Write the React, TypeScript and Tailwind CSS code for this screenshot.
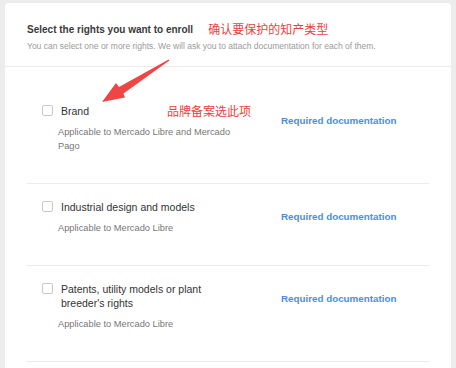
import React from "react";

const items = [
  {
    title: "Brand",
    sub: "Applicable to Mercado Libre and Mercado Pago",
  },
  { title: "Industrial design and models", sub: "Applicable to Mercado Libre" },
  {
    title: "Patents, utility models or plant breeder's rights",
    sub: "Applicable to Mercado Libre",
  },
];

const sans = "font-['Liberation_Sans','Noto_Sans_CJK_SC',sans-serif]";
const cjk = "font-['Noto_Sans_CJK_SC',sans-serif]";

function Checkbox() {
  return (
    <span className="mt-[1px] block h-[11px] w-[11px] shrink-0 rounded-[2px] border border-[#c8c8c8] bg-white" />
  );
}

export default function App() {
  return (
    <div className={`h-[368px] w-[456px] overflow-hidden bg-[#ececec] pl-[5px] pr-[5px] pt-[3px] ${sans}`}>
      <div className="relative h-[400px] rounded-[4px] bg-white">
        {/* Header */}
        <div className="border-b border-[#ececec] px-[22px] pb-[13px] pt-[18px]">
          <div className="flex items-center">
            <h2 className="text-[10px] font-bold leading-[15px] text-[#3a3a3a]">
              Select the rights you want to enroll
            </h2>
            <span className={`ml-[15px] text-[12px] leading-[16px] text-[#e8423d] ${cjk}`}>
              确认要保护的知产类型
            </span>
          </div>
          <p className="mt-[3px] text-[8.5px] leading-[13px] text-[#9a9a9a]">
            You can select one or more rights. We will ask you to attach documentation for each of them.
          </p>
        </div>

        {/* Rights list */}
        <div className="px-[22px] pt-[21px]">
          {items.map((it, i) => (
            <div
              key={i}
              className="flex border-b border-[#ececec] pb-[30px] pl-[15px] pt-[16px]"
            >
              <div className="w-[195px]">
                <div className="flex items-start gap-[8px]">
                  <Checkbox />
                  <span className="text-[10.5px] leading-[14px] text-[#333]">{it.title}</span>
                </div>
                <p className="ml-[16px] mt-[7px] text-[9.3px] leading-[14px] text-[#777]">{it.sub}</p>
              </div>
              <a className="ml-[44px] mt-[10px] text-[9.8px] font-bold leading-[14px] text-[#4a8fe0]">
                Required documentation
              </a>
            </div>
          ))}
        </div>

        {/* Annotations */}
        <span className={`absolute left-[162px] top-[100px] text-[12px] leading-[16px] text-[#e8423d] ${cjk}`}>
          品牌备案选此项
        </span>
        <svg className="absolute left-0 top-0" width="200" height="120" viewBox="0 0 200 120">
          <polygon
            points="163.6,56.6 164.4,57.4 118.5,90.5 120,94.5 97,99 111,80 114,84"
            fill="#f04545"
          />
        </svg>
      </div>
    </div>
  );
}
